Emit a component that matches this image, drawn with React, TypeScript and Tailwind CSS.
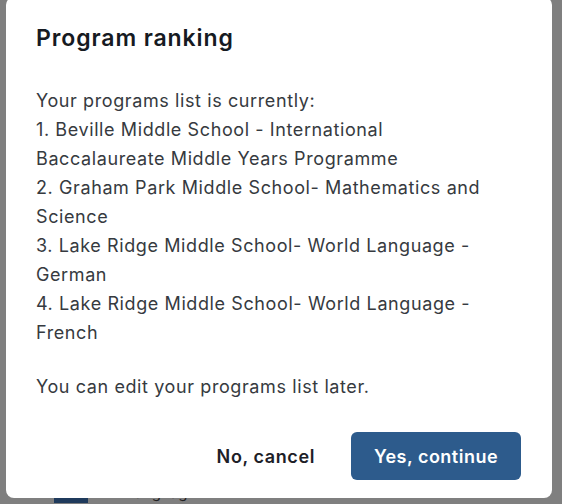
import React from "react"

const programs = [
  "1. Beville Middle School - International Baccalaureate Middle Years Programme",
  "2. Graham Park Middle School- Mathematics and Science",
  "3. Lake Ridge Middle School- World Language - German",
  "4. Lake Ridge Middle School- World Language - French",
]

export default function App() {
  return (
    <div
      className="w-[562px] h-[504px] overflow-hidden bg-[#7f7f7f] flex flex-col"
      style={{ fontFamily: "Inter, 'Noto Sans', sans-serif" }}
    >
      <div className="relative z-10 ml-[6px] -mt-[3px] w-[546px] h-[501px] shrink-0 bg-white rounded-[8px] flex flex-col px-[30px] pt-[27px]">
        <h2 className="text-[23px] leading-[28px] font-semibold text-[#161a22] tracking-[0.9px]">
          Program ranking
        </h2>
        <div className="mt-[34px] w-[478px] text-[18px] leading-[29px] text-[#363a40] tracking-[0.6px]">
          <p>Your programs list is currently:</p>
          {programs.map((p) => (
            <p key={p}>{p}</p>
          ))}
        </div>
        <p className="mt-[25px] text-[18px] leading-[29px] text-[#363a40] tracking-[0.6px]">
          You can edit your programs list later.
        </p>
        <div className="mt-[31px] flex items-center justify-end gap-[36px] pr-[1px]">
          <button className="text-[18px] font-semibold text-[#1d2027] tracking-[0.6px]">No, cancel</button>
          <button className="h-[48px] w-[170px] rounded-[6px] bg-[#2d5b8c] text-white text-[18px] font-semibold tracking-[0.5px]">
            Yes, continue
          </button>
        </div>
      </div>
      <div className="flex items-center gap-[38px] pl-[54px] h-[20px] -mt-[15px]">
        <div className="w-[34px] h-[20px] bg-[#1f3a5c]" />
        <span className="text-[15px] leading-[20px] text-[#222]">Language</span>
      </div>
    </div>
  )
}
